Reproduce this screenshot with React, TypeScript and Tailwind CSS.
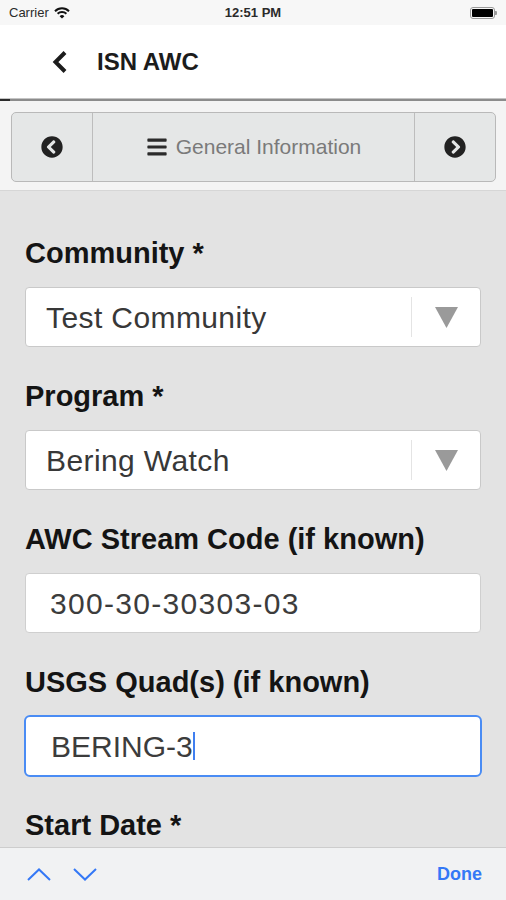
import { FaChevronCircleLeft, FaChevronCircleRight, FaBars } from 'react-icons/fa';

function Label({ text }: { text: string }) {
  return <div className="text-[29px] leading-[34px] font-bold text-[#141414]">{text}</div>;
}

function SelectBox({ value }: { value: string }) {
  return (
    <div className="mt-[17px] mb-[32px] h-[60px] bg-white border border-[#c9c9c9] rounded-[4px] flex items-center">
      <div className="flex-1 pl-[20px] text-[30px] tracking-[0.4px] text-[#383838]">{value}</div>
      <div className="w-px h-[40px] bg-[#e4e4e4]" />
      <div className="w-[68px] flex items-center justify-center">
        <svg width="23" height="21" viewBox="0 0 23 21">
          <polygon points="0,0 23,0 11.5,21" fill="#9a9a9a" />
        </svg>
      </div>
    </div>
  );
}

export default function App() {
  return (
    <div className="w-[506px] h-[900px] flex flex-col overflow-hidden font-['Liberation_Sans',Arial,sans-serif]">
      {/* status bar */}
      <div className="h-[25px] bg-[#f7f7f7] grid grid-cols-3 items-center px-[9px] text-[13px] text-[#2a2a2a]">
        <div className="flex items-center gap-[5px]">
          <span>Carrier</span>
          <svg width="16" height="12" viewBox="0 0 16 12">
            <path d="M1 4.2 A10 10 0 0 1 15 4.2" stroke="#111" strokeWidth="2" fill="none" />
            <path d="M3.6 6.8 A6.4 6.4 0 0 1 12.4 6.8" stroke="#111" strokeWidth="2" fill="none" />
            <path d="M5.6 9.2 L8 11.6 L10.4 9.2 A3.4 3.4 0 0 0 5.6 9.2 Z" fill="#111" />
          </svg>
        </div>
        <div className="text-center font-bold">12:51 PM</div>
        <div className="flex justify-end items-center">
          <div className="w-[25px] h-[12px] border border-[#9a9a9a] rounded-[3px] p-[1px]">
            <div className="w-full h-full bg-black rounded-[1px]" />
          </div>
          <div className="w-[2px] h-[4px] bg-[#9a9a9a] rounded-r-[1px]" />
        </div>
      </div>

      {/* nav bar */}
      <div className="h-[73px] bg-white flex items-center pl-[52px]">
        <svg width="16" height="24" viewBox="0 0 16 24">
          <polyline points="13,2.5 3.5,12 13,21.5" stroke="#1c1c1c" strokeWidth="4" fill="none" />
        </svg>
        <div className="ml-[29px] text-[24px] font-bold text-[#1c1c1c]">ISN AWC</div>
      </div>
      <div className="h-[3px] bg-[#8c8c8c] border-t border-[#c4c4c4] flex">
        <div className="w-[10px] bg-[#2a2a2a]" />
      </div>

      {/* section toolbar */}
      <div className="bg-[#f4f4f4] pt-[11px] pb-[8px] pl-[11px] pr-[10px] border-b border-[#d6d6d6]">
        <div className="h-[70px] flex bg-[#e5e7e7] border border-[#b9b9b9] rounded-[5px]">
          <div className="w-[81px] flex items-center justify-center border-r border-[#bdbdbd]">
            <FaChevronCircleLeft size={22} color="#222" />
          </div>
          <div className="flex-1 flex items-center justify-center gap-[8px]">
            <FaBars size={22} color="#2b2b2b" />
            <span className="text-[21px] text-[#7a7a7a]">General Information</span>
          </div>
          <div className="w-[81px] flex items-center justify-center border-l border-[#bdbdbd]">
            <FaChevronCircleRight size={22} color="#222" />
          </div>
        </div>
      </div>

      {/* form */}
      <div className="flex-1 overflow-hidden bg-[#e3e3e3] pt-[45px] px-[25px]">
        <Label text="Community *" />
        <SelectBox value="Test Community" />

        <Label text="Program *" />
        <SelectBox value="Bering Watch" />

        <Label text="AWC Stream Code (if known)" />
        <div className="mt-[17px] mb-[32px] h-[60px] bg-white border border-[#cfcfcf] rounded-[4px] flex items-center pl-[24px] text-[30px] tracking-[1.3px] text-[#3c3c3c]">
          300-30-30303-03
        </div>

        <Label text="USGS Quad(s) (if known)" />
        <div className="mt-[16px] mb-[31px] -mx-[1px] h-[62px] bg-white border-2 border-[#4a8cf4] rounded-[6px] flex items-center pl-[25px] text-[30px] text-[#3c3c3c]">
          <span>BERING-3</span>
          <span className="w-[2px] h-[28px] bg-[#3f7ff0]" />
        </div>

        <Label text="Start Date *" />
      </div>

      {/* keyboard accessory bar */}
      <div className="h-[53px] bg-[#f1f2f3] border-t border-[#cdcdcd] flex items-center pl-[27px] pr-[24px]">
        <svg width="24" height="13" viewBox="0 0 24 13">
          <polyline points="1,12 12,1.5 23,12" stroke="#3478f6" strokeWidth="2" fill="none" />
        </svg>
        <svg width="24" height="13" viewBox="0 0 24 13" className="ml-[22px]">
          <polyline points="1,1 12,11.5 23,1" stroke="#3478f6" strokeWidth="2" fill="none" />
        </svg>
        <div className="flex-1" />
        <span className="text-[18px] font-bold text-[#3478f6]">Done</span>
      </div>
    </div>
  );
}
